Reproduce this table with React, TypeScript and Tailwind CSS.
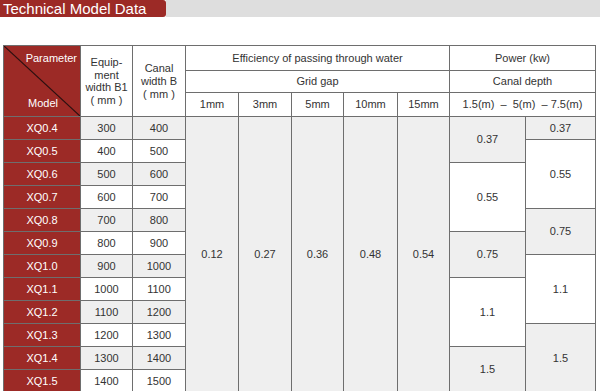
import React from 'react';

const RED = 'bg-[#9c2a26]';

const models = [
    ['XQ0.4', '300', '400'],
    ['XQ0.5', '400', '500'],
    ['XQ0.6', '500', '600'],
    ['XQ0.7', '600', '700'],
    ['XQ0.8', '700', '800'],
    ['XQ0.9', '800', '900'],
    ['XQ1.0', '900', '1000'],
    ['XQ1.1', '1000', '1100'],
    ['XQ1.2', '1100', '1200'],
    ['XQ1.3', '1200', '1300'],
    ['XQ1.4', '1300', '1400'],
    ['XQ1.5', '1400', '1500'],
];

const efficiency = ['0.12', '0.27', '0.36', '0.48', '0.54'];

// power blocks keyed by the row index where they start: [value, rowSpan, grey?]
const powerA: Record<number, [string, number, boolean]> = {
    0: ['0.37', 2, true],
    2: ['0.55', 3, false],
    5: ['0.75', 2, true],
    7: ['1.1', 3, false],
    10: ['1.5', 2, true],
};
const powerB: Record<number, [string, number, boolean]> = {
    0: ['0.37', 1, true],
    1: ['0.55', 3, false],
    4: ['0.75', 2, true],
    6: ['1.1', 3, false],
    9: ['1.5', 3, true],
};

const cell = 'border border-[#6e6e6e] text-center align-middle p-0';

export default function App() {
    return (
        <div className="w-[600px] h-[391px] overflow-hidden bg-white text-[#333] font-['Liberation_Sans',Arial,sans-serif]">
            <div className="flex h-[17px]">
                <div className={`${RED} w-[166px] rounded-r-[3px] pl-[3px] text-white text-[15px] leading-[17px]`}>
                    Technical Model Data
                </div>
                <div className="flex-1 bg-[#dedede]" />
            </div>

            <table className="mt-[28px] ml-[3px] w-[592px] table-fixed border-collapse text-[11px]">
                <colgroup>
                    <col className="w-[77px]" />
                    <col className="w-[52px]" />
                    <col className="w-[53px]" />
                    <col className="w-[53px]" />
                    <col className="w-[53px]" />
                    <col className="w-[52px]" />
                    <col className="w-[54px]" />
                    <col className="w-[52px]" />
                    <col className="w-[76px]" />
                    <col className="w-[70px]" />
                </colgroup>
                <thead>
                    <tr className="h-[25px]">
                        <th rowSpan={3} className={`${cell} ${RED} relative text-white font-normal`}>
                            <svg className="absolute inset-0 w-full h-full" preserveAspectRatio="none" viewBox="0 0 100 100">
                                <line x1="0" y1="0" x2="100" y2="100" stroke="#2a1010" strokeWidth="1.2" vectorEffect="non-scaling-stroke" />
                            </svg>
                            <div className="relative flex flex-col h-[70px] justify-between pt-[6px] pb-[6px]">
                                <span className="self-end pr-[3px] leading-[13px]">Parameter</span>
                                <span className="self-start pl-[24px] leading-[13px]">Model</span>
                            </div>
                        </th>
                        <th rowSpan={3} className={`${cell} font-normal leading-[12.5px]`}>
                            Equip-<br />ment<br />width B1<br />( mm )
                        </th>
                        <th rowSpan={3} className={`${cell} font-normal leading-[13px]`}>
                            Canal<br />width B<br />( mm )
                        </th>
                        <th colSpan={5} className={`${cell} font-normal`}>Efficiency of passing through water</th>
                        <th colSpan={2} className={`${cell} font-normal`}>Power (kw)</th>
                    </tr>
                    <tr className="h-[22px]">
                        <th colSpan={5} className={`${cell} font-normal`}>Grid gap</th>
                        <th colSpan={2} className={`${cell} font-normal`}>Canal depth</th>
                    </tr>
                    <tr className="h-[24px]">
                        {['1mm', '3mm', '5mm', '10mm', '15mm'].map(g => (
                            <th key={g} className={`${cell} font-normal`}>{g}</th>
                        ))}
                        <th colSpan={2} className={`${cell} font-normal whitespace-nowrap`}>
                            1.5(m) &nbsp;–&nbsp; 5(m) &nbsp;– 7.5(m)
                        </th>
                    </tr>
                </thead>
                <tbody>
                    {models.map(([m, b1, b], i) => {
                        const shade = i % 2 === 0 ? 'bg-[#efefef]' : 'bg-white';
                        const a = powerA[i];
                        const p = powerB[i];
                        return (
                            <tr key={m} className="h-[23px]">
                                <td className={`${cell} ${RED} text-white`}>{m}</td>
                                <td className={`${cell} ${shade}`}>{b1}</td>
                                <td className={`${cell} ${shade}`}>{b}</td>
                                {i === 0 && efficiency.map(v => (
                                    <td key={v} rowSpan={12} className={`${cell} bg-[#efefef]`}>{v}</td>
                                ))}
                                {a && (
                                    <td rowSpan={a[1]} className={`${cell} ${a[2] ? 'bg-[#efefef]' : 'bg-white'}`}>{a[0]}</td>
                                )}
                                {p && (
                                    <td rowSpan={p[1]} className={`${cell} ${p[2] ? 'bg-[#efefef]' : 'bg-white'}`}>{p[0]}</td>
                                )}
                            </tr>
                        );
                    })}
                </tbody>
            </table>
        </div>
    );
}
